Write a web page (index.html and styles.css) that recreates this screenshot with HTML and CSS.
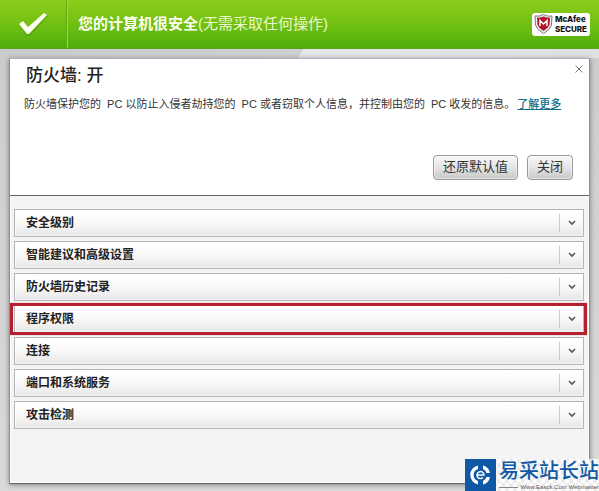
FILE: index.html
```
<!DOCTYPE html>
<html lang="zh-CN">
<head>
    <meta charset="UTF-8">
    <meta name="viewport" content="width=device-width, initial-scale=1.0">
    <title>防火墙</title>
    <link rel="stylesheet" href="styles.css">
</head>
<body>
    <header class="status-bar">
        <div class="status-icon">
            <svg width="30" height="25" viewBox="0 0 30 25">
                <path d="M1 12 L5 10 L11 16 L26 1 L30 3 L12 23 L9 23 Z" fill="#3f8f08" opacity="0.4" transform="translate(0 1)"/>
                <path d="M1 12 L5 9 L10 15 L26 1 L29 3 L11 22 L9 22 Z" fill="#fbfff2"/>
            </svg>
        </div>
        <p class="status-text"><strong>您的计算机很安全</strong>(无需采取任何操作)</p>
        <a class="secure-badge" href="#" aria-label="McAfee SECURE">
            <svg width="19" height="20" viewBox="0 0 19 20">
                <path d="M1 2 Q5 3 9.500 0.500 Q14 3 18 2 L17.500 11 Q16 16 9.500 19.500 Q3 16 1.500 11 Z" fill="#eeeeee" stroke="#777" stroke-width="1"/>
                <path d="M3 3.500 Q6.500 4 9.500 2.500 Q12.500 4 16 3.500 L15.500 11 Q14 14.500 9.500 17 Q5 14.500 3.500 11 Z" fill="#b3142c"/>
                <path d="M6 12 V6.500 L9.500 10 L13 6.500 V12" fill="none" stroke="#fff" stroke-width="1.500"/>
            </svg>
            <span class="secure-name">
                <span>McAfee</span>
                <span>SECURE</span>
            </span>
        </a>
    </header>

    <main class="panel">
        <section class="intro">
            <div class="intro-head">
                <h1>防火墙: 开</h1>
                <button class="close-icon" type="button" aria-label="关闭面板">
                    <svg width="8" height="8" viewBox="0 0 8 8">
                        <path d="M0.500 0.500 L7.500 7.500 M7.500 0.500 L0.500 7.500" stroke="#777" stroke-width="1"/>
                    </svg>
                </button>
            </div>
            <p class="intro-text">防火墙保护您的&nbsp; PC 以防止入侵者劫持您的&nbsp; PC 或者窃取个人信息，并控制由您的&nbsp; PC 收发的信息。<a href="#">了解更多</a></p>
            <div class="actions">
                <button class="btn" type="button">还原默认值</button>
                <button class="btn" type="button">关闭</button>
            </div>
        </section>

        <section class="drawers">
            <button class="drawer" type="button">
                <span class="drawer-label">安全级别</span>
                <span class="drawer-arrow"><svg width="8" height="6" viewBox="0 0 8 6"><path d="M1 1 L4 4 L7 1"/></svg></span>
            </button>
            <button class="drawer" type="button">
                <span class="drawer-label">智能建议和高级设置</span>
                <span class="drawer-arrow"><svg width="8" height="6" viewBox="0 0 8 6"><path d="M1 1 L4 4 L7 1"/></svg></span>
            </button>
            <button class="drawer" type="button">
                <span class="drawer-label">防火墙历史记录</span>
                <span class="drawer-arrow"><svg width="8" height="6" viewBox="0 0 8 6"><path d="M1 1 L4 4 L7 1"/></svg></span>
            </button>
            <button class="drawer marked" type="button">
                <span class="drawer-label">程序权限</span>
                <span class="drawer-arrow"><svg width="8" height="6" viewBox="0 0 8 6"><path d="M1 1 L4 4 L7 1"/></svg></span>
            </button>
            <button class="drawer" type="button">
                <span class="drawer-label">连接</span>
                <span class="drawer-arrow"><svg width="8" height="6" viewBox="0 0 8 6"><path d="M1 1 L4 4 L7 1"/></svg></span>
            </button>
            <button class="drawer" type="button">
                <span class="drawer-label">端口和系统服务</span>
                <span class="drawer-arrow"><svg width="8" height="6" viewBox="0 0 8 6"><path d="M1 1 L4 4 L7 1"/></svg></span>
            </button>
            <button class="drawer" type="button">
                <span class="drawer-label">攻击检测</span>
                <span class="drawer-arrow"><svg width="8" height="6" viewBox="0 0 8 6"><path d="M1 1 L4 4 L7 1"/></svg></span>
            </button>
        </section>
    </main>

    <!-- Site watermark over the bottom corner -->
    <div class="watermark">
        <svg class="watermark-logo" width="31" height="32" viewBox="0 0 31 32">
            <rect width="31" height="32" fill="#0f58a6"/>
            <path d="M13 6.500 A9.700 9.700 0 0 0 13 25.500 V22 A6.300 6.300 0 0 1 13 10 Z" fill="#fff"/>
            <path d="M18 6.500 A9.500 9.500 0 0 1 25 14 H21.500 A6 6 0 0 0 18 10 Z" fill="#fff"/>
            <path d="M25 18 A9.500 9.500 0 0 1 18 25.500 V22 A6 6 0 0 0 21.500 18 Z" fill="#fff"/>
            <path d="M12 16 H19 A3.500 3.500 0 1 0 18 18.500" fill="none" stroke="#fff" stroke-width="1.500"/>
        </svg>
        <div class="watermark-text">
            <span class="watermark-name">易采站长站</span>
            <span class="watermark-url">Www.Easck.Com Webmaster</span>
        </div>
    </div>
</body>
</html>
```

FILE: styles.css
```
* {
    box-sizing: border-box;
}
body {
    margin: 0;
    min-height: 100vh;
    display: flex;
    flex-direction: column;
    position: relative;
    background:
        linear-gradient(118deg, #cbcbcb 0, #d0d0d0 290px, #e6e6e8 291px, #e0e0e2 100%) 0 0 / 100% 58px no-repeat,
        linear-gradient(#cbcbcb, #dadada);
    font-family: "Liberation Sans", "Noto Sans CJK SC", sans-serif;
    color: #222;
}
h1, p {
    margin: 0;
}
button {
    font-family: inherit;
    cursor: pointer;
}

/* Green status bar */
.status-bar {
    display: flex;
    align-items: center;
    height: 49px;
    padding-right: 9px;
    background: linear-gradient(#8dcd1b, #72c013 50%, #4fae0b);
    border-bottom: 1px solid #58a324;
}
.status-icon {
    display: flex;
    align-items: center;
    width: 68px;
    height: 48px;
    padding-left: 18px;
    border-right: 1px solid #9fd44c;
    box-shadow: inset -1px 0 #5eab12;
}
.status-text {
    flex: 1;
    padding-left: 10px;
    font-size: 15px;
    line-height: 24px;
    color: #e9f8cd;
}
.status-text strong {
    color: #fcffef;
}
.secure-badge {
    display: flex;
    align-items: center;
    gap: 2px;
    height: 23px;
    padding: 0 3px 0 2px;
    border-radius: 3px;
    background: #fff;
    color: #111;
    text-decoration: none;
}
.secure-name {
    display: flex;
    flex-direction: column;
    font-family: Inter, sans-serif;
    font-size: 8px;
    font-weight: 800;
    line-height: 10px;
}

/* Firewall panel */
.panel {
    flex: 1;
    margin: 9px 9px 7px;
    background: #f4f4f4;
    border: 1px solid #8c8c96;
    border-top-color: #b2b2c4;
    border-bottom-color: #666;
    box-shadow: inset 0 0 0 1px #fff, 0 1px 5px rgba(0, 0, 0, 0.4);
}
.intro {
    padding: 4px 10px 15px 14px;
    background: #fff;
    border-bottom: 1px solid #666;
}
.intro-head {
    display: flex;
    align-items: flex-start;
    justify-content: space-between;
}
.intro-head h1 {
    padding-left: 2px;
    font-size: 17px;
    font-weight: 500;
    line-height: 26px;
}
.close-icon {
    display: flex;
    padding: 2px 0;
    margin-right: -4px;
    border: 0;
    background: none;
}
.intro-text {
    padding-top: 5px;
    font-size: 11px;
    line-height: 20px;
    color: #333;
}
.intro-text a {
    margin-left: 2px;
    color: #12708c;
    font-weight: 500;
}
.actions {
    display: flex;
    justify-content: flex-end;
    gap: 9px;
    padding: 41px 6px 0 0;
}
.btn {
    height: 25px;
    padding: 0 9px 2px;
    border: 1px solid #999;
    border-radius: 4px;
    background: linear-gradient(#f8f8f8, #e4e4e4 50%, #c8c8c8);
    box-shadow: inset 0 0 0 1px rgba(255, 255, 255, 0.5);
    font-size: 13px;
    line-height: 20px;
    color: #333;
}

/* Drawers */
.drawers {
    display: flex;
    flex-direction: column;
    gap: 4px;
    padding: 13px 5px 20px 4px;
}
.drawer {
    position: relative;
    display: flex;
    align-items: center;
    height: 28px;
    padding: 0 0 0 11px;
    border: 1px solid #b4b4b4;
    background: linear-gradient(#fff, #f9f9f9 50%, #e6e6e6);
    box-shadow: inset 0 0 0 1px rgba(255, 255, 255, 0.6);
    text-align: left;
    color: #222;
}
.drawer-label {
    flex: 1;
    font-size: 12px;
    font-weight: bold;
    line-height: 20px;
}
.drawer-arrow {
    display: flex;
    align-items: center;
    justify-content: center;
    width: 24px;
    height: 18px;
    border-left: 1px solid #ccc;
}
.drawer-arrow path {
    fill: none;
    stroke: #555;
    stroke-width: 1.6;
}
.marked::after {
    content: "";
    position: absolute;
    inset: -3px -4px -3px -5px;
    border: 3px solid #b5202e;
    box-shadow: 0 0 1px #e08890;
}

/* Watermark */
.watermark {
    position: absolute;
    right: 0;
    bottom: 0;
    display: flex;
    background: repeating-conic-gradient(#ececec 0 25%, #fdfdfd 0 50%) 0 0 / 8px 8px;
}
.watermark-text {
    display: flex;
    flex-direction: column;
    padding-left: 3px;
}
.watermark-name {
    font-size: 20px;
    font-weight: 500;
    line-height: 24px;
    color: #0f58a6;
}
.watermark-url {
    display: flex;
    align-items: center;
    gap: 2px;
    font-size: 6px;
    line-height: 8px;
    white-space: nowrap;
    color: #555;
}
.watermark-url::before {
    content: "";
    flex: 1;
    height: 1px;
    background: #888;
}
```
